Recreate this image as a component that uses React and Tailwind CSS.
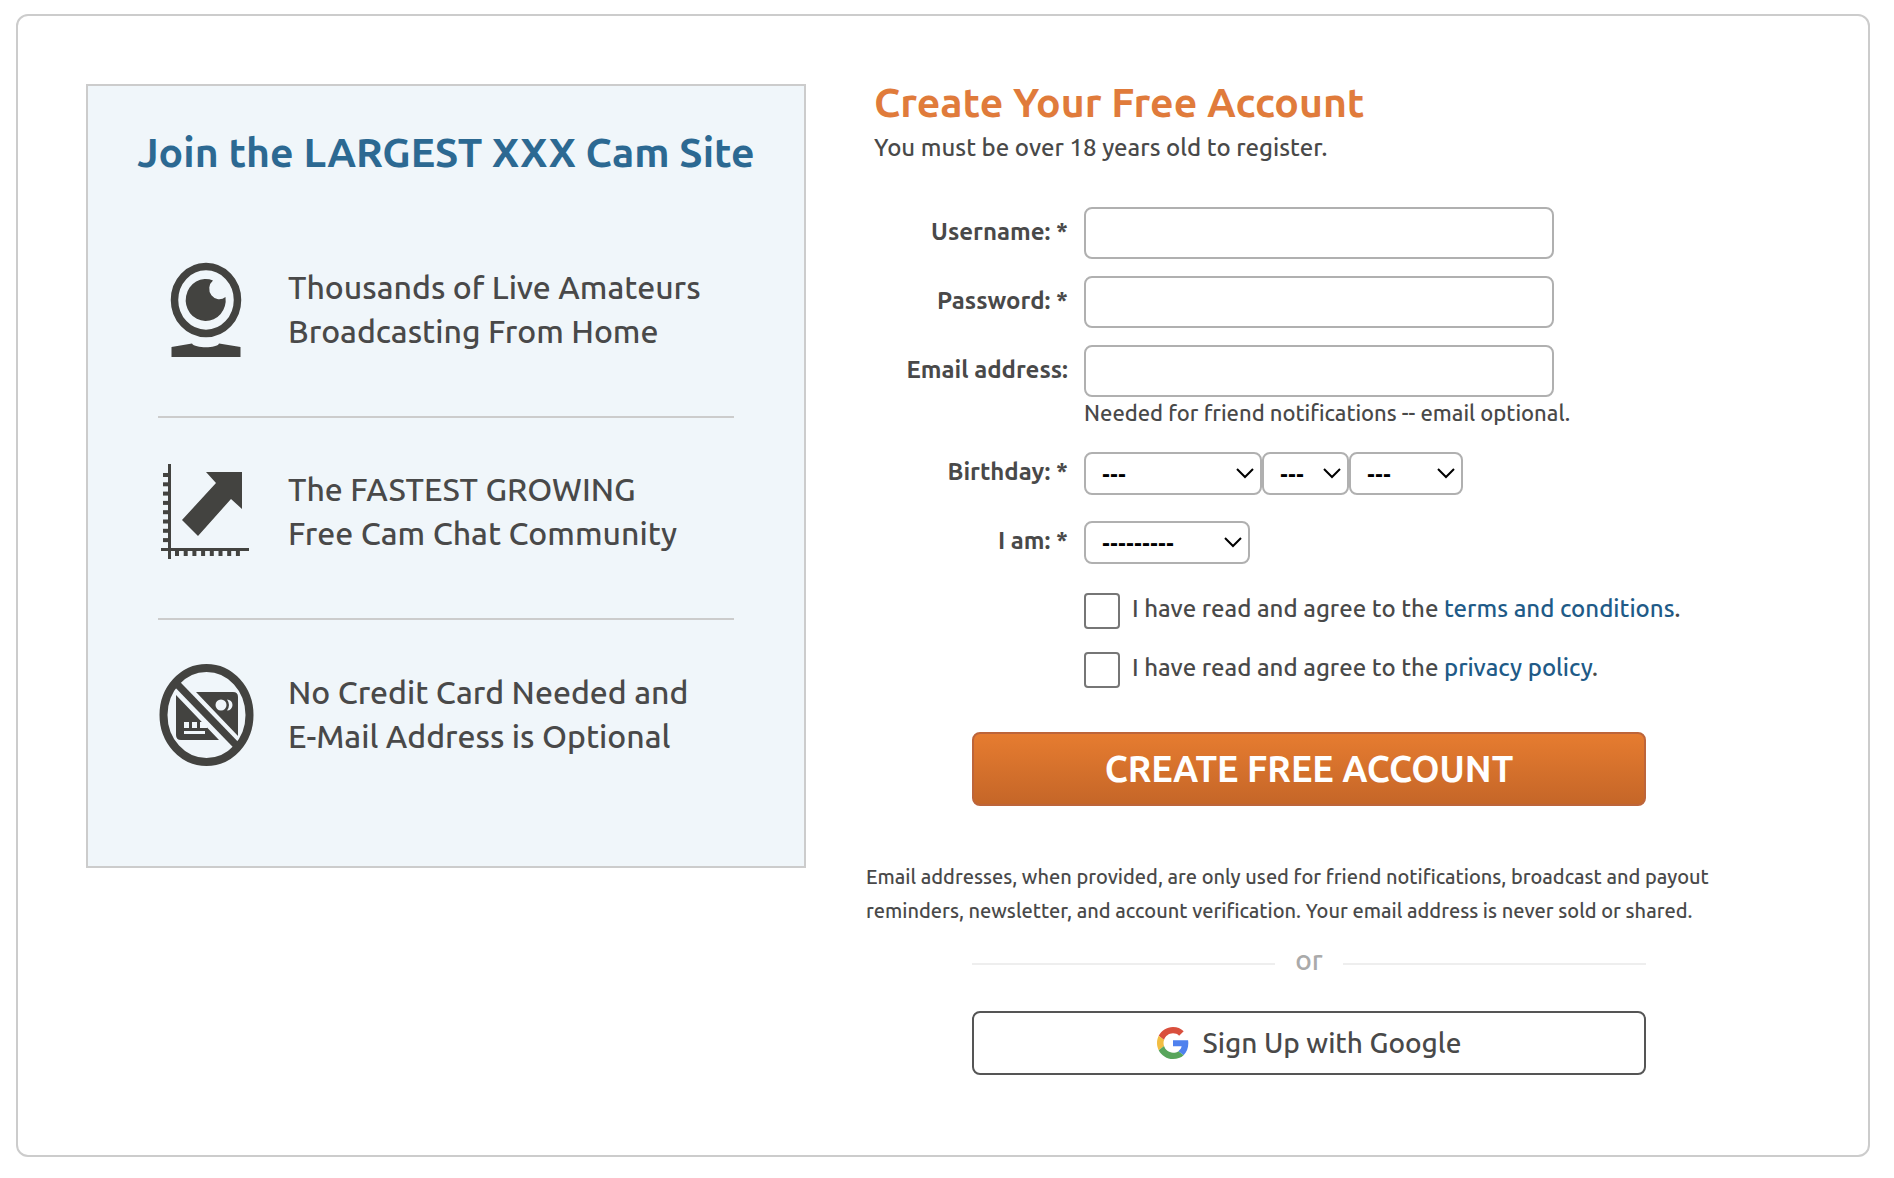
import React from "react";

const INK = "#434340";

function WebcamIcon() {
  return (
    <svg viewBox="1 0 96 104" className="h-[104px] w-24" fill={INK} aria-hidden="true">
      <ellipse cx="47" cy="40" rx="31.5" ry="33.5" fill="none" stroke={INK} strokeWidth="7.5" />
      <path d="M54 20.500A20 21 0 1 0 66.500 37A9.500 10 0 0 1 54 20.500Z" />
      <path d="M12.500 87 33 83.500C36 88.500 58 88.500 60 83.500L81.500 87V97H12.500Z" />
    </svg>
  );
}

function GrowthIcon() {
  const rows = [0, 1, 2, 3, 4, 5, 6, 7];
  return (
    <svg viewBox="0 2 96 104" className="h-[104px] w-24" fill={INK} aria-hidden="true">
      <path d="M8 4h3v95H8zM1 88h88v3H1z" />
      {rows.map((i) => (
        <rect key={i} x="3" y={13 + i * 9.3} width="5" height="4" />
      ))}
      {rows.map((i) => (
        <rect key={i} x={15 + i * 8.7} y="91" width="4" height="5" />
      ))}
      <path d="M46 12H82V49L71 39 38 76 22 60 56 23Z" />
    </svg>
  );
}

function NoCardIcon() {
  return (
    <svg viewBox="0 3 96 104" className="h-[104px] w-24 overflow-visible" aria-hidden="true">
      <path fill={INK} d="M36 30H73Q78 30 78 35V74ZM16 33V73Q16 78 21 78H59Z" />
      <g fill="#f0f6fa">
        <circle cx="61" cy="43" r="5.500" />
        <path d="M67 37.500a5.500 5.500 0 0 1 0 11Q71 43 67 37.500Z" />
        <path d="M24 60h5v6h-5zM32 60h5v6h-5zM40 60h3l4 4v2h-7zM24 69h21v3H24z" />
      </g>
      <path d="M16 21 76 83" stroke={INK} strokeWidth="7.500" />
      <ellipse cx="46.500" cy="53" rx="43" ry="47" fill="none" stroke={INK} strokeWidth="8" />
    </svg>
  );
}

function GoogleIcon() {
  return (
    <svg viewBox="0 0 48 48" className="size-8" aria-hidden="true">
      <path fill="#d94f3d" d="M24 9.500c3.540 0 6.710 1.220 9.210 3.600l6.850-6.850C35.900 2.380 30.470 0 24 0 14.620 0 6.510 5.380 2.560 13.220l7.980 6.190C12.430 13.720 17.740 9.500 24 9.500z" />
      <path fill="#4f81ee" d="M46.980 24.550c0-1.570-.15-3.090-.38-4.550H24v9.020h12.940c-.58 2.960-2.260 5.480-4.780 7.180l7.730 6c4.510-4.180 7.090-10.360 7.090-17.650z" />
      <path fill="#f2bd42" d="M10.530 28.590c-.48-1.450-.76-2.990-.76-4.590s.27-3.140.76-4.590l-7.980-6.190C.92 16.460 0 20.120 0 24c0 3.880.92 7.540 2.560 10.780l7.970-6.190z" />
      <path fill="#58a55c" d="M24 48c6.480 0 11.930-2.130 15.890-5.810l-7.730-6c-2.150 1.450-4.920 2.300-8.160 2.300-6.260 0-11.570-4.220-13.470-9.910l-7.980 6.190C6.510 42.620 14.620 48 24 48z" />
    </svg>
  );
}

const benefits = [
  { Icon: WebcamIcon, lines: ["Thousands of Live Amateurs", "Broadcasting From Home"] },
  { Icon: GrowthIcon, lines: ["The FASTEST GROWING", "Free Cam Chat Community"] },
  { Icon: NoCardIcon, lines: ["No Credit Card Needed and", "E-Mail Address is Optional"] },
];

function Row({ id, label, compact, children }) {
  return (
    <div className="flex items-start gap-4">
      <label
        htmlFor={id}
        className={"w-[202px] shrink-0 text-right text-2xl leading-8 font-semibold " + (compact ? "pt-1" : "pt-[9px]")}
      >
        {label}
      </label>
      {children}
    </div>
  );
}

function TextInput({ id, type = "text" }) {
  return (
    <input
      id={id}
      type={type}
      className="h-[52px] w-full max-w-[470px] rounded-lg border-2 border-[#b0b0b0] bg-white px-4 outline-none"
    />
  );
}

function Select({ id, label, text, width }) {
  return (
    <span className={"relative block " + width}>
      <select
        id={id}
        aria-label={label}
        className="h-[43px] w-full appearance-none rounded-lg border-2 border-[#b0b0b0] bg-white pl-4 font-['Liberation_Sans',Arial,sans-serif] text-2xl leading-8 font-bold text-black outline-none"
      >
        <option>{text}</option>
      </select>
      <svg viewBox="0 0 18 12" className="pointer-events-none absolute top-4 right-2 h-3 w-[18px]" fill="none" stroke="#000" strokeWidth="2" aria-hidden="true">
        <path d="M1 1 9 9 17 1" />
      </svg>
    </span>
  );
}

function Agree({ id, link }) {
  return (
    <div className="flex items-start gap-3">
      <input id={id} type="checkbox" className="size-9 shrink-0 appearance-none rounded border-2 border-[#767676] bg-white" />
      <label htmlFor={id} className="text-2xl leading-8">
        I have read and agree to the{" "}
        <a href="#" className="text-[#205a87]">{link}</a>.
      </label>
    </div>
  );
}

export default function App() {
  return (
    <div className="bg-white pt-3.5 pr-6 pb-5 pl-4 font-['Ubuntu','Noto_Sans',sans-serif] font-medium text-[#494949]">
      <main className="flex items-start gap-[60px] rounded-xl border-2 border-[#ccc] pt-[68px] pr-[116px] pb-20 pl-[68px]">
        <section className="w-[720px] border-2 border-[#ccc] bg-[#f0f6fa] pt-9 pb-11">
          <h2 className="text-center text-[41px] leading-[60px] font-semibold text-[#2c6992]">Join the LARGEST XXX Cam Site</h2>
          <ul className="mx-[70px] mt-[34px] divide-y-2 divide-[#ccc]">
            {benefits.map(({ Icon, lines }) => (
              <li key={lines[0]} className="flex h-[202px] items-center gap-8 pl-0.5">
                <div className="pb-2">
                  <Icon />
                </div>
                <p className="pb-3.5 text-[32px] leading-[44px]">
                  {lines[0]}
                  <br />
                  {lines[1]}
                </p>
              </li>
            ))}
          </ul>
        </section>

        <section className="min-w-0 flex-1">
          <form onSubmit={(e) => e.preventDefault()}>
            <div className="pl-2">
              <h1 className="text-[41px] leading-9 font-semibold text-[#e07b3b]">Create Your Free Account</h1>
              <p className="pt-3 text-2xl leading-8">You must be over 18 years old to register.</p>
            </div>
            <div className="mt-[43px] flex flex-col gap-[17px]">
              <Row id="username" label="Username: *"><TextInput id="username" /></Row>
              <Row id="password" label="Password: *"><TextInput id="password" type="password" /></Row>
              <Row id="email" label="Email address:">
                <div className="flex-1">
                  <TextInput id="email" />
                  <p className="text-[22px] leading-8">Needed for friend notifications -- email optional.</p>
                </div>
              </Row>
            </div>
            <div className="mt-[23px] flex flex-col gap-[26px]">
              <Row id="month" label="Birthday: *" compact>
                <div className="flex">
                  <Select id="month" text="---" width="w-[178px]" />
                  <Select label="Day" text="---" width="w-[87px]" />
                  <Select label="Year" text="---" width="w-[114px]" />
                </div>
              </Row>
              <Row id="gender" label="I am: *" compact>
                <Select id="gender" text="---------" width="w-[166px]" />
              </Row>
            </div>
            <div className="mt-[29px] flex flex-col gap-[23px] pl-[218px]">
              <Agree id="terms" link="terms and conditions" />
              <Agree id="privacy" link="privacy policy" />
            </div>
            <button type="submit" className="mx-auto mt-11 block h-[74px] w-[76%] rounded-lg border-2 border-[#bd653a] bg-linear-to-b from-[#e67c30] to-[#c56628] text-4xl font-bold text-white">
              CREATE FREE ACCOUNT
            </button>
          </form>
          <p className="mt-[54px] text-xl leading-[34px]">
            Email addresses, when provided, are only used for friend notifications, broadcast and payout reminders, newsletter, and account verification. Your email address is never sold or shared.
          </p>
          <div className="mx-auto mt-4 flex w-[76%] items-center gap-5 text-[28px] leading-8 text-[#aaa]">
            <span className="h-0.5 flex-1 bg-[#eee]" />
            <span className="pb-2">or</span>
            <span className="h-0.5 flex-1 bg-[#eee]" />
          </div>
          <button type="button" className="mx-auto mt-[27px] flex h-16 w-[76%] items-center justify-center gap-3.5 rounded-lg border-2 border-[#555] bg-white text-[28px]">
            <GoogleIcon />
            Sign Up with Google
          </button>
        </section>
      </main>
    </div>
  );
}
